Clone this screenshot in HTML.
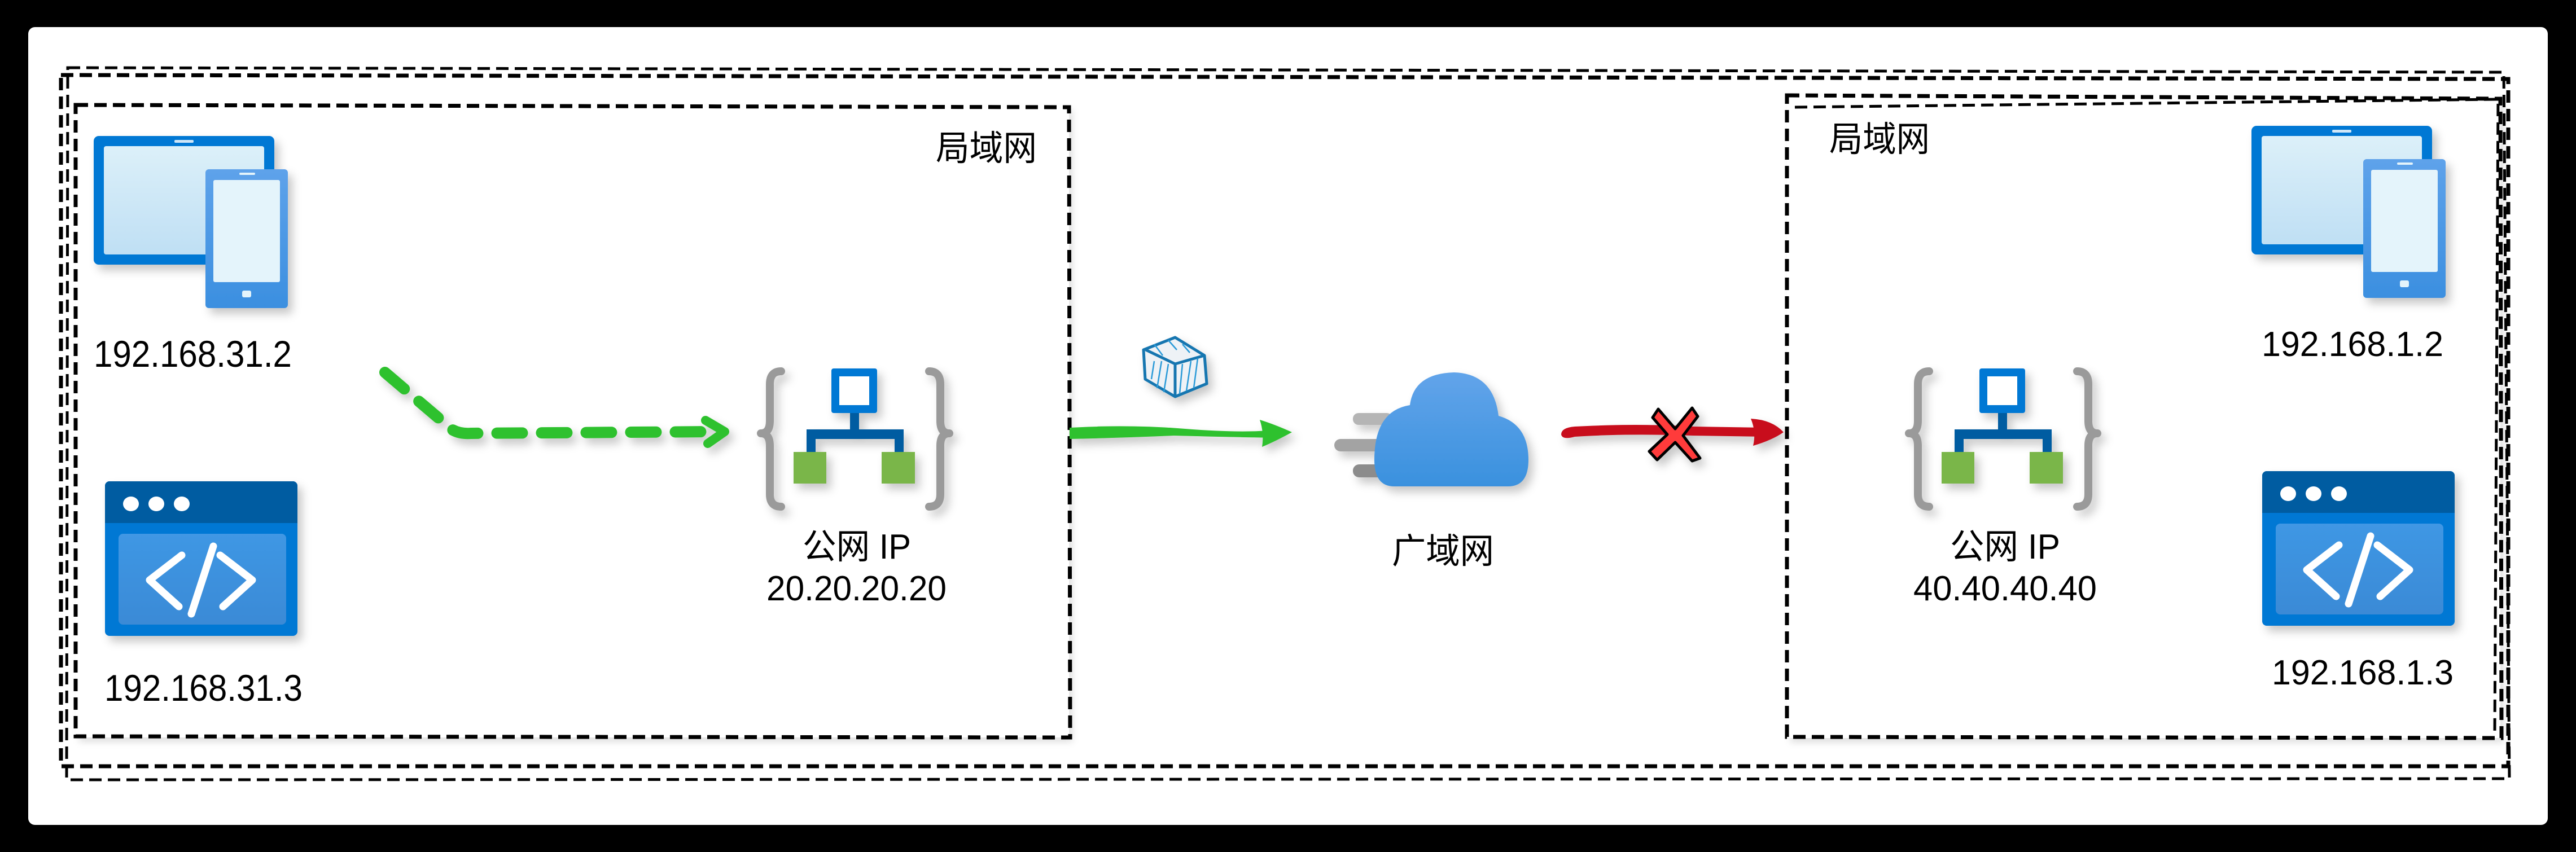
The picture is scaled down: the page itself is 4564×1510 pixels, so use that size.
<!DOCTYPE html>
<html><head><meta charset="utf-8"><style>
html,body{margin:0;padding:0;background:#000;}
svg{display:block}
text{font-family:"Liberation Sans","Noto Sans CJK SC",sans-serif;fill:#000}
</style></head><body>
<svg width="4564" height="1510" viewBox="0 0 4564 1510" xmlns="http://www.w3.org/2000/svg">
<defs>
<linearGradient id="scr" x1="0" y1="0" x2="0" y2="1"><stop offset="0" stop-color="#dcf0f9"/><stop offset="1" stop-color="#bfdff4"/></linearGradient>
<linearGradient id="ph" x1="0" y1="0" x2="0" y2="1"><stop offset="0" stop-color="#5ea2ea"/><stop offset="1" stop-color="#3b8fe0"/></linearGradient>
<linearGradient id="cl" x1="0" y1="0" x2="0" y2="1"><stop offset="0" stop-color="#62a4ea"/><stop offset="1" stop-color="#3a91de"/></linearGradient>
<linearGradient id="pn" x1="0" y1="0" x2="0" y2="1"><stop offset="0" stop-color="#3f97e4"/><stop offset="1" stop-color="#3a8ad6"/></linearGradient>
<filter id="sh" x="-20%" y="-20%" width="150%" height="150%"><feDropShadow dx="8" dy="10" stdDeviation="8" flood-color="#000" flood-opacity="0.22"/></filter>
<filter id="sh2" x="-5%" y="-5%" width="110%" height="110%"><feDropShadow dx="6" dy="8" stdDeviation="6" flood-color="#000" flood-opacity="0.12"/></filter>
<g id="dev">
<rect x="0" y="0" width="320" height="228" rx="9" fill="#0078d4"/>
<rect x="18" y="18" width="284" height="192" rx="4" fill="url(#scr)"/>
<rect x="143" y="7" width="34" height="5" rx="2" fill="#cfe6f7"/>
<rect x="198" y="59" width="146" height="246" rx="6" fill="url(#ph)"/>
<rect x="212" y="78" width="118" height="181" rx="3" fill="#e4f4fb"/>
<rect x="258" y="65" width="28" height="4" rx="2" fill="#e4f4fb"/>
<rect x="263" y="274" width="16" height="12" rx="3" fill="#e4f4fb"/>
</g>
<g id="code">
<rect x="0" y="0" width="341" height="274" rx="8" fill="#0078d4"/>
<path d="M8 0 H333 A8 8 0 0 1 341 8 V74 H0 V8 A8 8 0 0 1 8 0Z" fill="#005ba1"/>
<rect x="24" y="93" width="297" height="161" rx="8" fill="url(#pn)"/>
<ellipse cx="46" cy="40" rx="14" ry="13" fill="#fff"/>
<ellipse cx="91" cy="40" rx="14" ry="13" fill="#fff"/>
<ellipse cx="136" cy="40" rx="14" ry="13" fill="#fff"/>
<polyline points="136,131 79,175 131,222" fill="none" stroke="#fff" stroke-width="13" stroke-linejoin="round" stroke-linecap="round"/>
<polyline points="204,131 261,175 209,222" fill="none" stroke="#fff" stroke-width="13" stroke-linejoin="round" stroke-linecap="round"/>
<line x1="192" y1="115" x2="153" y2="235" stroke="#fff" stroke-width="13" stroke-linecap="round"/>
</g>
<g id="net">
<path d="M38 22 Q18 22 18 45 V110 Q18 132 2 132 Q18 132 18 154 V240 Q18 262 38 262" fill="none" stroke="#9a9a9a" stroke-width="14" stroke-linecap="round" stroke-linejoin="round"/>
<path d="M300 22 Q320 22 320 45 V110 Q320 132 336 132 Q320 132 320 154 V240 Q320 262 300 262" fill="none" stroke="#9a9a9a" stroke-width="14" stroke-linecap="round" stroke-linejoin="round"/>
<rect x="127" y="17" width="81" height="79" rx="4" fill="#0078d4"/>
<rect x="141" y="31" width="53" height="51" fill="#fff"/>
<rect x="160" y="96" width="16" height="32" fill="#005ba1"/>
<rect x="83" y="125" width="172" height="17" fill="#005ba1"/>
<rect x="83" y="125" width="16" height="42" fill="#005ba1"/>
<rect x="239" y="125" width="16" height="42" fill="#005ba1"/>
<rect x="60" y="165" width="58" height="56" fill="#7ab648"/>
<rect x="216" y="165" width="59" height="56" fill="#7ab648"/>
</g>
</defs>

<rect x="50" y="48" width="4464" height="1414" rx="12" fill="#fff"/>

<g fill="none" stroke="#000" stroke-width="7" stroke-dasharray="22 11">
<path d="M108 133 L4444 140 L4444 1358 L108 1358 Z"/>
<path d="M120 120 L4436 128 L4446 1380 L118 1382 Z" stroke-width="5"/>
</g>

<rect x="134" y="186" width="1760" height="1121" fill="#fff" filter="url(#sh2)"/>
<rect x="3166" y="169" width="1264" height="1139" fill="#fff" filter="url(#sh2)"/>
<g fill="none" stroke="#000" stroke-width="7" stroke-dasharray="22 11">
<path d="M134 186 L1894 190 L1896 1307 L134 1305 Z"/>
<path d="M3166 169 L4430 175 L4432 1308 L3166 1306 Z"/>
<path d="M3180 190 L4426 176 L4420 1296" stroke-width="5"/>
</g>

<text x="1658" y="284" font-size="62" textLength="179" lengthAdjust="spacingAndGlyphs">局域网</text>
<text x="3241" y="268" font-size="62" textLength="178" lengthAdjust="spacingAndGlyphs">局域网</text>

<g filter="url(#sh)">
<use href="#dev" x="166" y="241"/>
<use href="#dev" x="3989" y="223"/>
<use href="#code" x="186" y="853"/>
<use href="#code" x="4008" y="835"/>
<use href="#net" x="1346" y="636"/>
<use href="#net" x="3380" y="636"/>
</g>

<text x="166" y="650" font-size="66" textLength="351" lengthAdjust="spacingAndGlyphs">192.168.31.2</text>
<text x="185" y="1242" font-size="66" textLength="351" lengthAdjust="spacingAndGlyphs">192.168.31.3</text>
<text x="4007" y="631" font-size="62" textLength="322" lengthAdjust="spacingAndGlyphs">192.168.1.2</text>
<text x="4025" y="1213" font-size="62" textLength="322" lengthAdjust="spacingAndGlyphs">192.168.1.3</text>
<text x="1422" y="990" font-size="62" textLength="192" lengthAdjust="spacingAndGlyphs">公网 IP</text>
<text x="1358" y="1064" font-size="62" textLength="319" lengthAdjust="spacingAndGlyphs">20.20.20.20</text>
<text x="3455" y="990" font-size="62" textLength="195" lengthAdjust="spacingAndGlyphs">公网 IP</text>
<text x="3390" y="1064" font-size="62" textLength="325" lengthAdjust="spacingAndGlyphs">40.40.40.40</text>
<text x="2466" y="998" font-size="62" textLength="181" lengthAdjust="spacingAndGlyphs">广域网</text>

<g filter="url(#sh)">
<path d="M682 660 L790 752 Q805 770 835 768 L1265 765" fill="none" stroke="#2fc12f" stroke-width="20" stroke-linecap="round" stroke-dasharray="45 34"/>
<path d="M1250 745 L1284 765 L1254 786" fill="none" stroke="#2fc12f" stroke-width="16" stroke-linecap="round" stroke-linejoin="round"/>

<path d="M1895 758 Q2000 752 2100 760 Q2200 768 2260 762 L2260 776 Q2150 774 2080 772 Q1990 776 1895 778 Z" fill="#2fc12f"/>
<path d="M2232 744 Q2258 752 2289 766 Q2260 782 2236 792 Q2240 768 2232 744Z" fill="#2fc12f"/>

<path d="M2766 770 Q2766 758 2790 756 Q2900 750 3000 756 L3130 758 L3130 774 L3000 772 Q2880 768 2790 774 Q2768 780 2766 770Z" fill="#c8101e"/>
<path d="M3102 742 Q3140 744 3160 766 Q3140 780 3106 790 Q3112 766 3102 742Z" fill="#c8101e"/>

<path d="M2938 725 L2968 760 L2998 723 L3008 738 L2982 772 L3012 812 L2998 817 L2968 784 L2936 815 L2922 800 L2954 770 L2928 740 Z" fill="#ff3b3b" stroke="#000" stroke-width="5" stroke-linejoin="round"/>

<rect x="2397" y="732" width="70" height="21" rx="10" fill="#b5b5b5"/>
<rect x="2364" y="778" width="100" height="22" rx="11" fill="#a3a3a3"/>
<rect x="2397" y="823" width="70" height="23" rx="11" fill="#8c8c8c"/>
<path d="M2470 862 Q2435 862 2435 815 Q2435 728 2498 718 Q2505 662 2576 660 Q2646 662 2655 737 Q2708 752 2708 815 Q2708 862 2672 862 Z" fill="url(#cl)"/>

<g fill="none" stroke="#1676b0" stroke-width="5" stroke-linejoin="round">
<path d="M2082 598 L2134 630 L2138 680 L2082 703 L2029 672 L2026 620 Z" fill="#eef2f6"/>
<path d="M2030 620 L2082 645 L2134 630 M2082 645 L2082 703"/>
<path d="M2045 640 L2040 672 M2058 640 L2050 688 M2070 645 L2062 695 M2095 645 L2090 698 M2110 640 L2102 693 M2122 635 L2115 688 M2045 610 L2060 630 M2070 603 L2085 620 M2095 610 L2108 625" stroke-width="2.5" stroke="#2a9ad8"/>
</g>
</g>
</svg>
</body></html>
